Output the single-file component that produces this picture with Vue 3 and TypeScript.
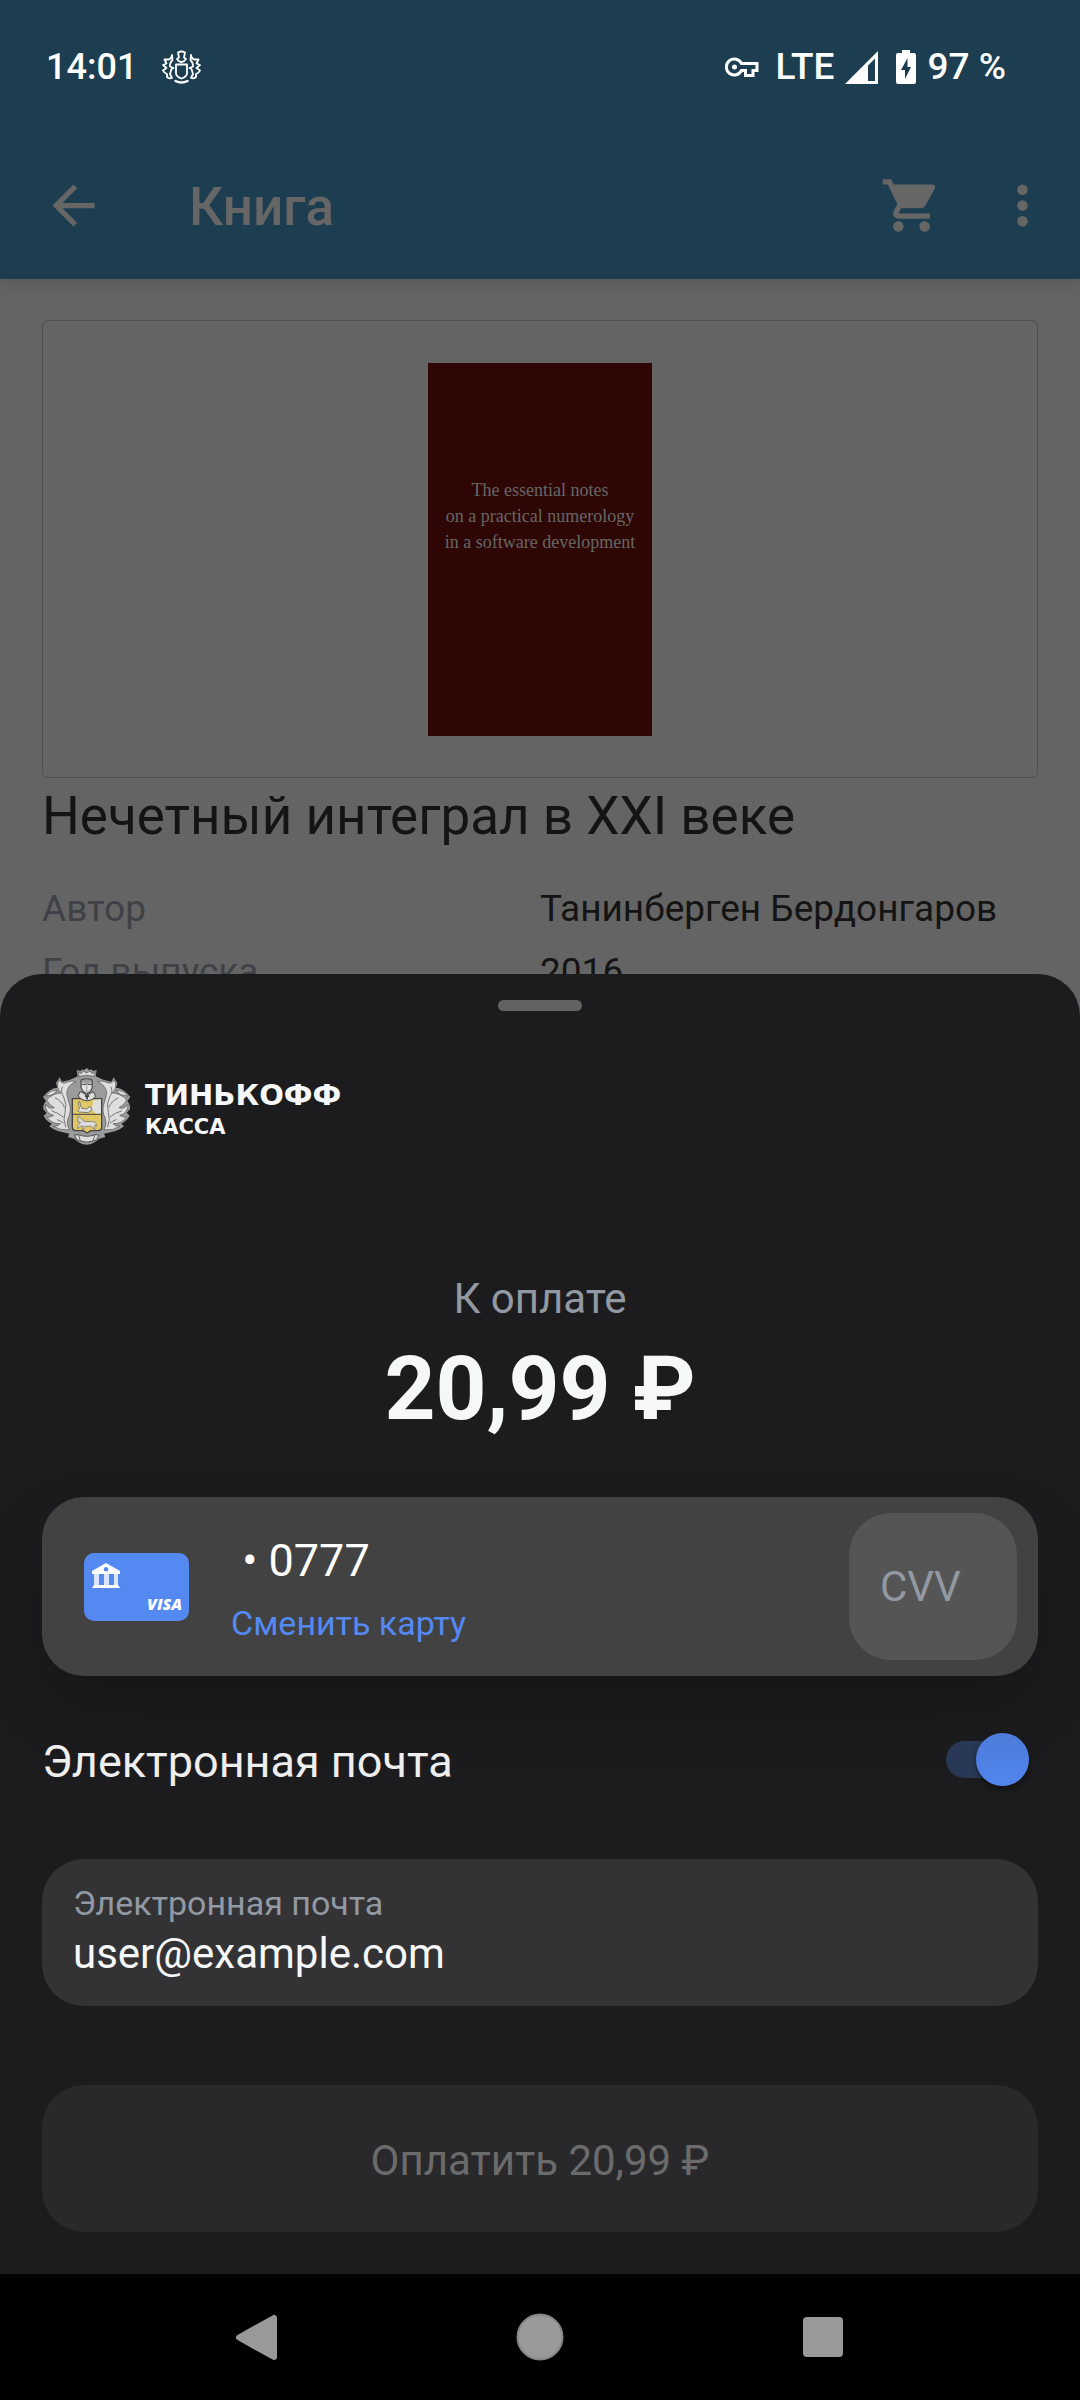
<script setup lang="ts">
import { ref } from 'vue'

interface Detail {
  name: string
  value: string
}

const details: Detail[] = [
  { name: 'Автор', value: 'Танинберген Бердонгаров' },
  { name: 'Год выпуска', value: '2016' },
]

const coverLines: string[] = [
  'The essential notes',
  'on a practical numerology',
  'in a software development',
]

const amount = '20,99 ₽'
const cardNumber = ' • 0777'
const cvv = ref('')
const sendReceipt = ref(true)
const email = ref('user@example.com')
</script>

<template>
  <div class="screen">
    <div class="backdrop">
      <header class="top">
        <div class="status">
          <span class="time">14:01</span>
          <svg class="status-emblem" viewBox="0 0 40 36" width="40" height="36" fill="none" stroke="#fff" stroke-width="1.800" stroke-linejoin="round" stroke-linecap="round">
            <path d="M17 3.500Q20.500 1.500 24 3.500L23 8.500L25 10Q23 13 20.500 13Q18 13 16 10L18 8.500Z" />
            <path d="M15 15.500H26V25Q25 28 20.500 29.500Q16 28 15 25Z" />
            <path d="M14.500 32Q20.500 35 26.500 32" stroke-width="2.500" />
            <path d="M11 6Q11 9 8 10.500L3.500 10.500L5.500 14.500L2 16L5.500 19L2 21.500Q3 24 6 25L6 28Q8 30 11 29L9 25L10.500 20L12.500 19L9 17.500Q8.500 14 11.500 11Z" />
            <path d="M30 6Q30 9 33 10.500L37.500 10.500L35.500 14.500L39 16L35.500 19L39 21.500Q38 24 35 25L35 28Q33 30 30 29L32 25L30.500 20L28.500 19L32 17.500Q32.500 14 29.500 11Z" />
          </svg>
          <div class="status-right">
            <svg viewBox="0 0 34 22" width="34" height="22" fill="none" stroke="#fff" stroke-width="3">
              <path d="M16.500 7.500A8 8 0 1 0 16.500 14.500H20.500V19.500H28V14.500H32V7.500Z" />
              <circle cx="9.500" cy="11" r="2.500" fill="#fff" stroke="none" />
            </svg>
            <span class="network">LTE</span>
            <svg viewBox="0 0 33 33" width="33" height="33">
              <path fill="#fff" fill-rule="evenodd" d="M33 0V33H0ZM30 7.500L23 14.500V30H30Z" />
            </svg>
            <svg class="battery" viewBox="0 0 20 34" width="20" height="34">
              <path fill="#fff" fill-rule="evenodd" d="M6 0H14V3H18Q20 3 20 5V32Q20 34 18 34H2Q0 34 0 32V5Q0 3 2 3H6ZM11.500 8L5 20H9V29L15 17H11.500Z" />
            </svg>
            <span>97 %</span>
          </div>
        </div>
        <div class="toolbar">
          <button class="icon-button" type="button" aria-label="Назад">
            <svg viewBox="0 0 24 24" width="63" height="63" fill="#666"><path d="M20 11H7.830l5.590-5.590L12 4l-8 8 8 8 1.410-1.410L7.830 13H20v-2z" /></svg>
          </button>
          <h1>Книга</h1>
          <button class="icon-button cart" type="button" aria-label="Корзина">
            <svg viewBox="0 0 24 24" width="63" height="63" fill="#666"><path d="M7 18c-1.100 0-1.990.9-1.990 2S5.900 22 7 22s2-.9 2-2-.9-2-2-2zM1 2v2h2l3.600 7.590-1.350 2.450c-.16.28-.25.61-.25.96 0 1.100.9 2 2 2h12v-2H7.420c-.14 0-.25-.11-.25-.25l.03-.12.9-1.630h7.450c.75 0 1.410-.41 1.750-1.030l3.580-6.490c.08-.14.12-.31.12-.48 0-.55-.45-1-1-1H5.210l-.94-2H1zm16 16c-1.100 0-1.990.9-1.990 2s.89 2 1.990 2 2-.9 2-2-.9-2-2-2z" /></svg>
          </button>
          <button class="icon-button" type="button" aria-label="Ещё">
            <svg viewBox="0 0 24 24" width="63" height="63" fill="#666"><circle cx="12" cy="6" r="2" /><circle cx="12" cy="12" r="2" /><circle cx="12" cy="18" r="2" /></svg>
          </button>
        </div>
      </header>

      <main class="book">
        <div class="cover-frame">
          <div class="cover">
            <span v-for="line in coverLines" :key="line">{{ line }}</span>
          </div>
        </div>
        <h2>Нечетный интеграл в XXI веке</h2>
        <dl>
          <div v-for="item in details" :key="item.name" class="detail">
            <dt>{{ item.name }}</dt>
            <dd>{{ item.value }}</dd>
          </div>
        </dl>
      </main>
    </div>

    <section class="sheet">
      <div class="handle"></div>

      <div class="brand">
        <svg viewBox="36 34 267 234" width="89" height="78" stroke-linejoin="round" stroke-linecap="round">
          <path fill="#9b9b9b" d="M170 37L178 44L184 41L188 46L200 43L197 62Q210 68 222 73Q236 76 244 78L251 65L262 82L258 96Q282 98 301 124L292 136Q302 148 300 160L290 172L299 180Q290 196 274 204L282 212Q264 228 222 234L226 244L206 250Q192 266 170 267Q148 266 134 250L114 244L118 234Q76 228 58 212L66 204Q48 196 41 180L50 172L40 160Q38 148 48 136L39 124Q58 98 82 96L78 82L89 65L96 78Q104 76 118 73Q130 68 143 62L140 43L152 46L156 41L162 44Z" />
          <g fill="#dedede" stroke="#555" stroke-width="2">
            <path d="M88 73Q96 88 112 79Q124 74 138 78Q112 88 110 112Q112 126 118 144Q126 166 114 188Q108 204 118 222Q92 226 70 212Q84 212 91 204Q66 206 50 184Q62 186 71 179Q46 174 46 146Q58 162 73 156Q54 146 50 132Q70 112 94 112Q78 98 84 80Z" />
            <path d="M48 121Q58 103 81 104Q74 119 48 121Z" />
            <path d="M252 73Q244 88 228 79Q216 74 202 78Q228 88 230 112Q228 126 222 144Q214 166 226 188Q232 204 222 222Q248 226 270 212Q256 212 249 204Q274 206 290 184Q278 186 269 179Q294 174 294 146Q282 162 267 156Q286 146 290 132Q270 112 246 112Q262 98 256 80Z" />
            <path d="M292 121Q282 103 259 104Q266 119 292 121Z" />
          </g>
          <g fill="none" stroke="#777" stroke-width="3">
            <path d="M97 94Q90 108 101 124Q112 144 105 170Q98 192 107 214M76 127Q96 136 103 154M66 166Q86 172 100 184M82 192Q92 196 100 202" />
            <path d="M243 94Q250 108 239 124Q228 144 235 170Q242 192 233 214M264 127Q244 136 237 154M274 166Q254 172 240 184M258 192Q248 196 240 202" />
          </g>
          <path fill="#dedede" stroke="#555" stroke-width="2" d="M148 62L144 48L154 54L160 46L170 52L180 46L186 54L196 48L192 62Q170 56 148 62Z" />
          <path fill="#dfc767" stroke="#444" stroke-width="4" d="M127 129H215V216Q215 224 205 225H183L171 232L159 225H137Q127 224 127 216Z" />
          <path fill="#dedede" stroke="#444" stroke-width="3" d="M152 108L171 118L190 108L197 122L186 132L171 136L156 132L145 122Z" />
          <path fill="#9b9b9b" stroke="#444" stroke-width="3" d="M154 72Q170 65 186 72L187 96Q184 110 170 116Q156 110 153 96Z" />
          <path fill="#e4e4e4" d="M157 80L169 84V110Q158 104 156 96ZM183 80L172 84V110Q182 104 184 96Z" />
          <path stroke="#333" stroke-width="3" d="M158 86H167M174 86H182" />
          <path stroke="#333" stroke-width="5" d="M166 121H176M171 121V130" />
          <path fill="#dedede" d="M190 133L213 131V174H199L186 163Z" />
          <path fill="#dedede" stroke="#555" stroke-width="2" d="M145 140L149 137L152 151L156 158L170 160L180 152L186 163L174 171L148 169L143 165L148 160Z" />
          <path stroke="#444" stroke-width="3" d="M127 176H215" />
          <path fill="#dedede" stroke="#666" stroke-width="2" d="M145 182L155 190L161 197L184 198Q194 196 198 203L199 212L196 208L192 213L195 222L188 216L182 211L166 212L162 221L157 221L160 211L151 212L143 219L143 210L149 205L151 199L145 199Z" />
          <path fill="#dedede" stroke="#555" stroke-width="3" d="M135 238L145 237Q170 247 195 237L207 238L199 252L190 256Q170 263 150 256L141 252Z" />
          <path fill="none" stroke="#666" stroke-width="3" d="M146 239L151 255M194 239L189 255" />
        </svg>
        <div class="brand-name">
          <span class="brand-main">ТИНЬКОФФ</span>
          <span class="brand-sub">КАССА</span>
        </div>
      </div>

      <p class="due">К оплате</p>
      <p class="amount">{{ amount }}</p>

      <div class="card">
        <svg viewBox="0 0 105 68" width="105" height="68">
          <rect width="105" height="68" rx="10" fill="#5589f2" />
          <path fill="#fff" fill-rule="evenodd" d="M22 10L36 18V21H8V18ZM22 14A2.300 2.300 0 1 0 22.010 14Z" />
          <path fill="#fff" d="M10 32H34L36 35H8Z" />
          <path fill="#dbe6fd" d="M10 21H15V32H10ZM20 21H25V32H20ZM30 21H34V32H30Z" />
          <text x="63" y="57" class="visa">VISA</text>
        </svg>
        <div class="card-text">
          <span class="card-number">{{ cardNumber }}</span>
          <button class="change" type="button">Сменить карту</button>
        </div>
        <input v-model="cvv" class="cvv" type="text" inputmode="numeric" placeholder="CVV" aria-label="CVV" />
      </div>

      <div class="receipt">
        <label for="receipt">Электронная почта</label>
        <input id="receipt" v-model="sendReceipt" class="switch" type="checkbox" role="switch" />
      </div>

      <div class="field">
        <label for="email">Электронная почта</label>
        <input id="email" v-model="email" type="email" />
      </div>

      <button class="pay" type="button" disabled>Оплатить {{ amount }}</button>
    </section>

    <nav class="system-nav">
      <button type="button" aria-label="Назад">
        <svg viewBox="0 0 48 48" width="48" height="48"><path fill="#999" stroke="#999" stroke-width="6" stroke-linejoin="round" d="M6 24.500L41 5V44Z" /></svg>
      </button>
      <button type="button" aria-label="Домой">
        <svg viewBox="0 0 48 48" width="48" height="48"><circle cx="24" cy="24" r="22.500" fill="#999" stroke="#858585" stroke-width="2" /></svg>
      </button>
      <button type="button" aria-label="Недавние">
        <svg viewBox="0 0 48 48" width="48" height="48"><rect x="4" y="4" width="40" height="40" rx="4" fill="#999" /></svg>
      </button>
    </nav>
  </div>
</template>

<style>
body {
  background: #646464;
}
</style>

<style scoped>
* {
  box-sizing: border-box;
}

h1,
h2,
p,
dl,
dd {
  margin: 0;
  font-weight: 400;
}

svg {
  display: block;
  flex: none;
}

button,
input {
  margin: 0;
  padding: 0;
  border: 0;
  background: none;
  color: inherit;
  font: inherit;
}

.screen {
  position: relative;
  display: flex;
  flex-direction: column;
  min-height: 100vh;
  font-family: Roboto, "Liberation Sans", sans-serif;
}

.backdrop {
  position: absolute;
  inset: 0;
  overflow: hidden;
  background: #646464;
}

.top {
  position: relative;
  background: #1c3e50;
  box-shadow: 0 4px 16px rgba(0, 0, 0, 0.14);
}

.status {
  display: flex;
  align-items: center;
  height: 132px;
  padding: 2px 74px 0 46px;
  color: #fff;
  font-size: 36px;
  font-weight: 500;
  line-height: 42px;
}

.status-emblem {
  margin-left: 24px;
}

.status-right {
  display: flex;
  align-items: center;
  margin-left: auto;
  font-size: 37px;
}

.network {
  margin: 0 10px 0 17px;
}

.battery {
  margin: 0 12px 0 18px;
}

.toolbar {
  display: flex;
  align-items: center;
  height: 147px;
  padding: 0 26px 0 42px;
}

.toolbar h1 {
  flex: 1;
  margin-left: 84px;
  padding-top: 3px;
  color: #666;
  font-size: 53px;
  font-weight: 500;
  line-height: 62px;
}

.cart {
  margin-right: 48px;
}

.book {
  padding: 41px 42px;
}

.cover-frame {
  display: flex;
  justify-content: center;
  padding: 42px 42px 41px;
  border: 1px solid #505050;
  border-radius: 6px;
}

.cover {
  display: flex;
  flex-direction: column;
  align-items: center;
  width: 224px;
  height: 373px;
  padding-top: 114px;
  background: #2e0604;
  color: #666;
  font-family: "Liberation Serif", serif;
  font-size: 18px;
  line-height: 26px;
  white-space: nowrap;
}

.book h2 {
  margin: 7px 0 40px;
  color: #141414;
  font-size: 53px;
  line-height: 62px;
}

dl {
  display: flex;
  flex-direction: column;
  gap: 20px;
  font-size: 37px;
  line-height: 43px;
}

.detail {
  display: grid;
  grid-template-columns: 1fr 1fr;
}

dt {
  color: #404146;
}

dd {
  color: #141414;
}

.sheet {
  position: relative;
  display: flex;
  flex-direction: column;
  margin-top: auto;
  padding: 26px 42px 42px;
  border-radius: 42px 42px 0 0;
  background: #1c1c1e;
}

.handle {
  align-self: center;
  width: 84px;
  height: 11px;
  border-radius: 6px;
  background: #626262;
}

.brand {
  display: flex;
  align-items: center;
  gap: 14px;
  height: 78px;
  margin-top: 56px;
  color: #f6f7f8;
  font-family: "DejaVu Sans", sans-serif;
  font-weight: 700;
}

.brand-name {
  display: flex;
  flex-direction: column;
  padding-top: 9px;
}

.brand-main {
  font-size: 29px;
  line-height: 32px;
}

.brand-sub {
  font-size: 21px;
  line-height: 32px;
}

.due {
  margin-top: 129px;
  color: #9299a2;
  font-size: 42px;
  line-height: 50px;
  text-align: center;
}

.amount {
  margin-top: 13px;
  color: #f6f7f8;
  font-size: 89px;
  font-weight: 700;
  line-height: 104px;
  text-align: center;
}

.card {
  display: flex;
  align-items: center;
  height: 179px;
  margin-top: 56px;
  padding: 0 21px 0 42px;
  border-radius: 42px;
  background: #424242;
  box-shadow: 0 32px 64px rgba(0, 0, 0, 0.2);
}

.card-text {
  display: flex;
  flex: 1;
  flex-direction: column;
  align-items: flex-start;
  gap: 16px;
  margin-left: 42px;
  padding-top: 4px;
}

.card-number {
  color: #fff;
  font-size: 45px;
  line-height: 53px;
  white-space: pre;
}

.change {
  color: #5589f2;
  font-size: 34px;
  line-height: 40px;
}

.visa {
  fill: #fff;
  font-family: "Open Sans", sans-serif;
  font-size: 16px;
  font-style: italic;
  font-weight: 800;
}

.cvv {
  width: 168px;
  height: 147px;
  padding: 0 31px;
  border-radius: 42px;
  background: #555;
  color: #f6f7f8;
  font-size: 42px;
}

.cvv::placeholder {
  color: #9299a2;
  opacity: 1;
}

.receipt {
  display: flex;
  align-items: center;
  justify-content: space-between;
  height: 62px;
  margin-top: 53px;
  padding-right: 18px;
  color: #eee;
  font-size: 45px;
  line-height: 53px;
}

.receipt label {
  padding-top: 2px;
}

.switch {
  position: relative;
  width: 74px;
  height: 37px;
  margin-bottom: 2px;
  border-radius: 19px;
  background: #3a3a3c;
  appearance: none;
}

.switch::before {
  position: absolute;
  top: -8px;
  left: -9px;
  width: 53px;
  height: 53px;
  border-radius: 50%;
  background: #bbb;
  box-shadow: 0 3px 6px rgba(0, 0, 0, 0.4);
  content: "";
}

.switch:checked {
  background: #293856;
}

.switch:checked::before {
  left: 30px;
  background: linear-gradient(#4d7bdb, #5285ec);
}

.field {
  display: flex;
  flex-direction: column;
  gap: 5px;
  height: 147px;
  margin-top: 68px;
  padding: 24px 31px 0;
  border-radius: 42px;
  background: #333335;
}

.field label {
  color: #9299a2;
  font-size: 34px;
  line-height: 40px;
}

.field input {
  height: 50px;
  color: #f6f7f8;
  font-size: 42px;
}

.pay {
  height: 147px;
  margin-top: 79px;
  padding-top: 3px;
  border-radius: 42px;
  background: #29292b;
  color: #6b6b6c;
  font-size: 42px;
}

.system-nav {
  position: relative;
  display: flex;
  align-items: center;
  justify-content: center;
  gap: 235px;
  height: 126px;
  background: #000;
}
</style>
